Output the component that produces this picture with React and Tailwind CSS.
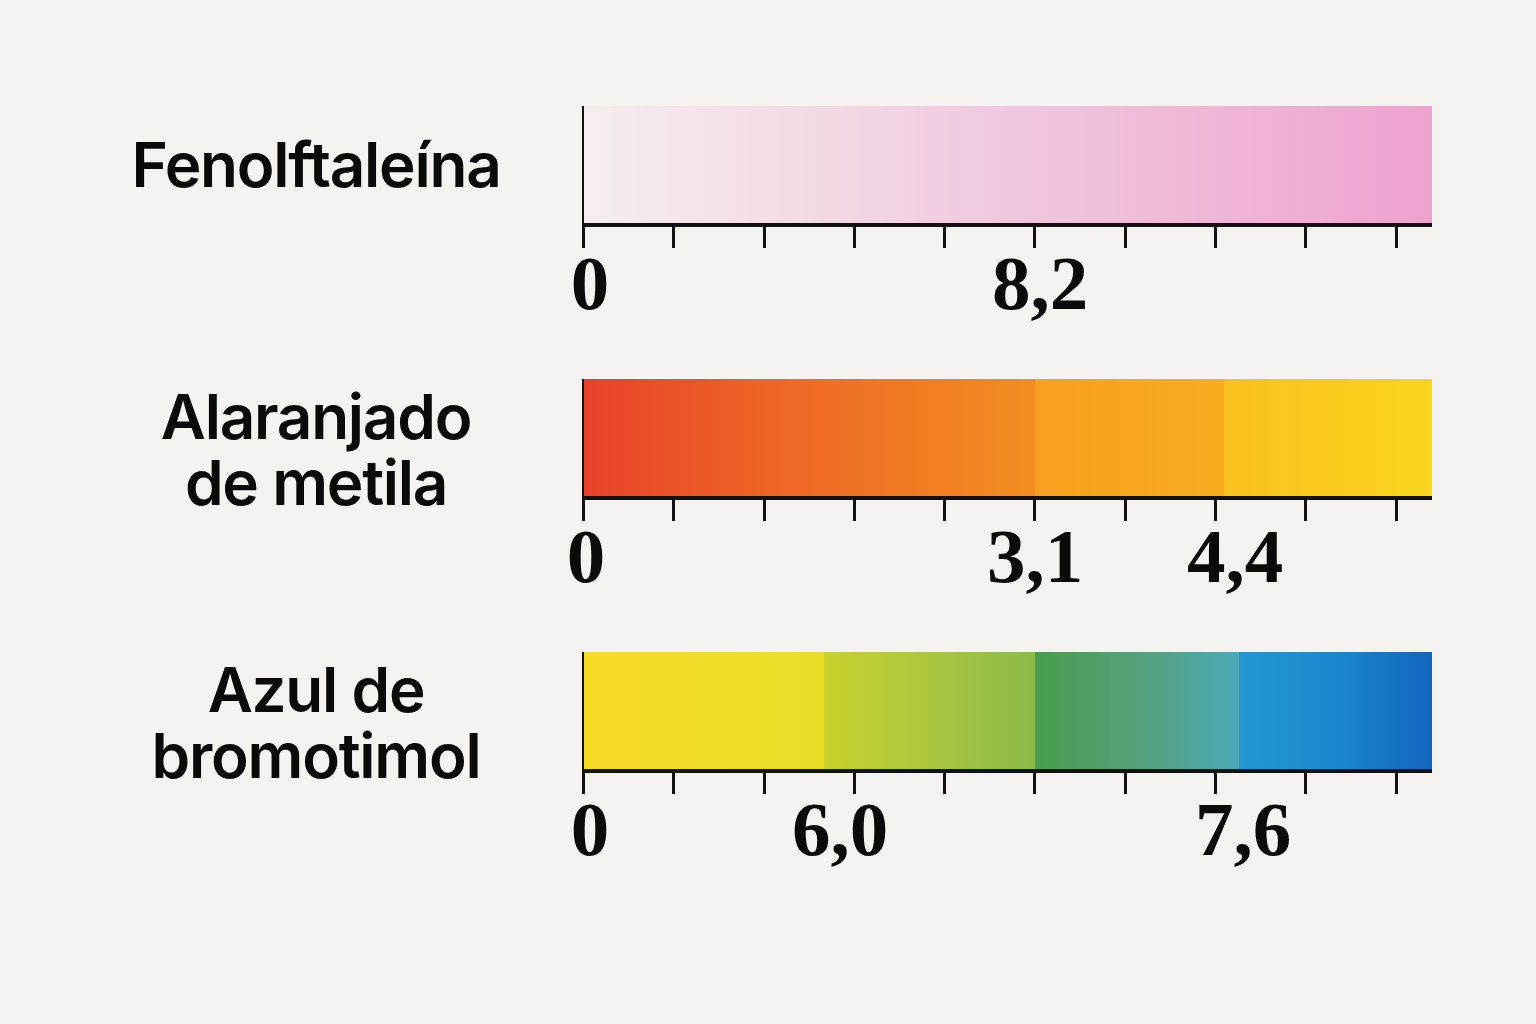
const indicators = [
  {
    lines: ["Fenolftaleína"],
    labelTop: "mt-[26px]",
    segments: [
      "w-full bg-linear-to-r from-[#f5eef0] via-[#f0c8de] to-[#eda2ce]",
    ],
    marks: [
      { text: "0", pos: "left-[8px]" },
      { text: "8,2", pos: "left-[458px]" },
    ],
  },
  {
    lines: ["Alaranjado", "de metila"],
    labelTop: "mt-[5px]",
    segments: [
      "w-[451px] bg-linear-to-r from-[#e8412a] via-[#ee6b25] to-[#f28d20]",
      "w-[189px] bg-linear-to-r from-[#f6a01f] to-[#f8ac1d]",
      "flex-1 bg-linear-to-r from-[#f9c11d] to-[#f9d51b]",
    ],
    marks: [
      { text: "0", pos: "left-[4px]" },
      { text: "3,1", pos: "left-[453px]" },
      { text: "4,4", pos: "left-[653px]" },
    ],
  },
  {
    lines: ["Azul de", "bromotimol"],
    labelTop: "mt-[5px]",
    segments: [
      "w-[240px] bg-linear-to-r from-[#f7dc27] to-[#e9de25]",
      "w-[211px] bg-linear-to-r from-[#c9d22b] to-[#8bba4a]",
      "w-[204px] bg-linear-to-r from-[#489d4c] via-[#56a07a] to-[#4aaab6]",
      "flex-1 bg-linear-to-r from-[#2497d3] via-[#1a88cc] to-[#1464c0]",
    ],
    marks: [
      { text: "0", pos: "left-[8px]" },
      { text: "6,0", pos: "left-[258px]" },
      { text: "7,6", pos: "left-[661px]" },
    ],
  },
];

const ticks = [0, 1, 2, 3, 4, 5, 6, 7, 8, 9];

function Scale({ item }) {
  return (
    <div className="w-[850px]">
      <div className="border-l-[3px] border-[#111]">
        <div className="flex h-[117px] -ml-[1px]">
          {item.segments.map((seg, i) => (
            <div key={i} className={seg} />
          ))}
        </div>
        <div className="h-[4px] bg-[#111]" />
        <div className="flex h-[21px] -ml-[3px]">
          {ticks.map((t) => (
            <div key={t} className="w-[90.3px] shrink-0">
              <div className="w-[3px] h-full bg-[#111]" />
            </div>
          ))}
        </div>
      </div>
      <div className="relative h-[74px] -mt-[3px]">
        {item.marks.map((m) => (
          <span
            key={m.text}
            className={`absolute top-0 ${m.pos} -translate-x-1/2 text-[77px] leading-none font-bold text-[#0a0a0a] font-['Liberation_Serif',serif]`}
          >
            {m.text}
          </span>
        ))}
      </div>
    </div>
  );
}

export default function App() {
  return (
    <div className="w-[1536px] h-[1024px] bg-[#f4f3ef] pt-[106px] overflow-hidden">
      <div className="flex flex-col gap-[60px]">
        {indicators.map((item) => (
          <div key={item.lines[0]} className="flex">
            <div
              className={`w-[582px] pl-[50px] text-center ${item.labelTop} text-[62px] leading-[66px] font-semibold tracking-[-0.02em] text-[#0a0a0a] font-['Inter',sans-serif]`}
            >
              {item.lines.map((l) => (
                <div key={l}>{l}</div>
              ))}
            </div>
            <Scale item={item} />
          </div>
        ))}
      </div>
    </div>
  );
}
